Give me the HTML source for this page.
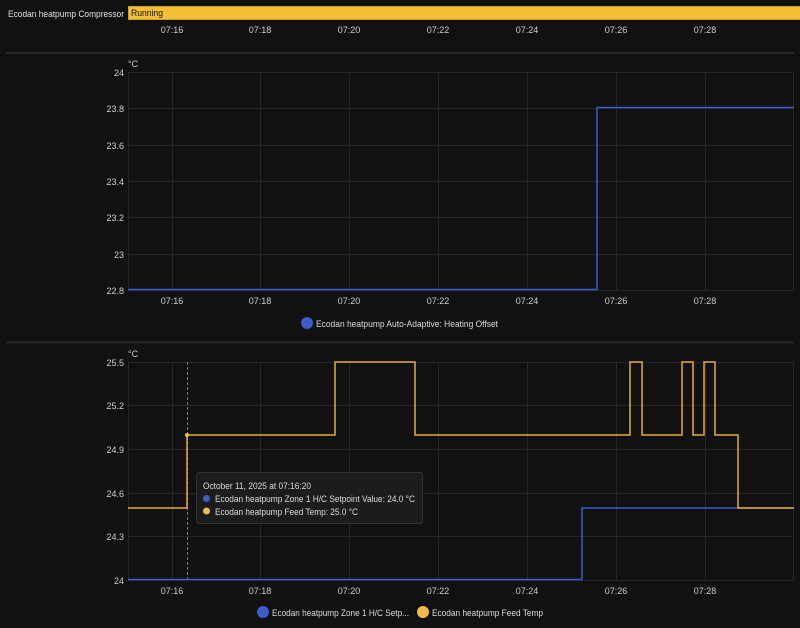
<!DOCTYPE html>
<html><head><meta charset="utf-8"><style>
html,body{margin:0;padding:0;background:#111111;width:800px;height:628px;overflow:hidden;font-family:"Liberation Sans",Roboto,sans-serif;}
svg text{font-family:"Liberation Sans",sans-serif;}
</style></head><body>
<svg width="800" height="628" viewBox="0 0 800 628" xmlns="http://www.w3.org/2000/svg">
<rect width="800" height="628" fill="#111111"/>
<text x="8" y="17" font-size="9.5" fill="#e1e1e1" textLength="116" lengthAdjust="spacingAndGlyphs">Ecodan heatpump Compressor</text>
<rect x="128.5" y="6.5" width="672" height="13" fill="#f4bf33" stroke="#c9a02c"/>
<text x="131" y="16" font-size="9.5" fill="#111" textLength="32" lengthAdjust="spacingAndGlyphs">Running</text>
<g font-size="9" fill="#cfcfcf" text-anchor="middle">
<text x="172" y="33">07:16</text><text x="260" y="33">07:18</text><text x="349" y="33">07:20</text><text x="438" y="33">07:22</text><text x="527" y="33">07:24</text><text x="616" y="33">07:26</text><text x="705" y="33">07:28</text>
</g>
<line x1="6" y1="53" x2="794" y2="53" stroke="#2e2e2e" stroke-width="1.5"/>
<g stroke="#262626" stroke-width="1">
<line x1="128" y1="72.5" x2="794" y2="72.5"/><line x1="128" y1="108.5" x2="794" y2="108.5"/><line x1="128" y1="145.5" x2="794" y2="145.5"/><line x1="128" y1="181.5" x2="794" y2="181.5"/><line x1="128" y1="217.5" x2="794" y2="217.5"/><line x1="128" y1="254.5" x2="794" y2="254.5"/><line x1="128" y1="290.5" x2="794" y2="290.5"/>
<line x1="128.5" y1="72" x2="128.5" y2="290"/><line x1="172.5" y1="72" x2="172.5" y2="290"/><line x1="260.5" y1="72" x2="260.5" y2="290"/><line x1="349.5" y1="72" x2="349.5" y2="290"/><line x1="438.5" y1="72" x2="438.5" y2="290"/><line x1="527.5" y1="72" x2="527.5" y2="290"/><line x1="616.5" y1="72" x2="616.5" y2="290"/><line x1="705.5" y1="72" x2="705.5" y2="290"/><line x1="793.5" y1="72" x2="793.5" y2="290"/>
</g>
<g font-size="9" fill="#cfcfcf" text-anchor="end">
<text x="124" y="76">24</text><text x="124" y="112">23.8</text><text x="124" y="149">23.6</text><text x="124" y="185">23.4</text><text x="124" y="221">23.2</text><text x="124" y="258">23</text><text x="124" y="294">22.8</text>
</g>
<text x="128" y="67" font-size="9" fill="#cfcfcf">°C</text>
<polyline points="128,289.5 597,289.5 597,107.5 794,107.5" fill="none" stroke="#3d5bc9" stroke-width="1.5"/>
<g font-size="9" fill="#cfcfcf" text-anchor="middle">
<text x="172" y="304">07:16</text><text x="260" y="304">07:18</text><text x="349" y="304">07:20</text><text x="438" y="304">07:22</text><text x="527" y="304">07:24</text><text x="616" y="304">07:26</text><text x="705" y="304">07:28</text>
</g>
<circle cx="307" cy="323" r="6" fill="#3d5bc9"/>
<text x="316" y="327" font-size="9.5" fill="#dcdcdc" textLength="182" lengthAdjust="spacingAndGlyphs">Ecodan heatpump Auto-Adaptive: Heating Offset</text>
<line x1="6" y1="342.5" x2="794" y2="342.5" stroke="#2e2e2e" stroke-width="1.5"/>
<g stroke="#262626" stroke-width="1">
<line x1="128" y1="362.5" x2="794" y2="362.5"/><line x1="128" y1="405.5" x2="794" y2="405.5"/><line x1="128" y1="449.5" x2="794" y2="449.5"/><line x1="128" y1="493.5" x2="794" y2="493.5"/><line x1="128" y1="536.5" x2="794" y2="536.5"/><line x1="128" y1="580.5" x2="794" y2="580.5"/>
<line x1="128.5" y1="362" x2="128.5" y2="580"/><line x1="172.5" y1="362" x2="172.5" y2="580"/><line x1="260.5" y1="362" x2="260.5" y2="580"/><line x1="349.5" y1="362" x2="349.5" y2="580"/><line x1="438.5" y1="362" x2="438.5" y2="580"/><line x1="527.5" y1="362" x2="527.5" y2="580"/><line x1="616.5" y1="362" x2="616.5" y2="580"/><line x1="705.5" y1="362" x2="705.5" y2="580"/><line x1="793.5" y1="362" x2="793.5" y2="580"/>
</g>
<g font-size="9" fill="#cfcfcf" text-anchor="end">
<text x="124" y="366">25.5</text><text x="124" y="409">25.2</text><text x="124" y="453">24.9</text><text x="124" y="497">24.6</text><text x="124" y="540">24.3</text><text x="124" y="584">24</text>
</g>
<text x="128" y="357" font-size="9" fill="#cfcfcf">°C</text>
<line x1="187.5" y1="362" x2="187.5" y2="580" stroke="#4a7fc0" stroke-width="1" stroke-dasharray="3,2"/>
<polyline points="128,579.5 582,579.5 582,508 794,508" fill="none" stroke="#3d5bc9" stroke-width="1.5"/>
<polyline points="128,508 187,508 187,435 335,435 335,362 415,362 415,435 630,435 630,362 642,362 642,435 682,435 682,362 693,362 693,435 704,435 704,362 715,362 715,435 738,435 738,508 794,508" fill="none" stroke="#e3ac3a" stroke-width="1.5"/>
<circle cx="187" cy="435" r="2" fill="#f4bf33"/>
<g font-size="9" fill="#cfcfcf" text-anchor="middle">
<text x="172" y="594">07:16</text><text x="260" y="594">07:18</text><text x="349" y="594">07:20</text><text x="438" y="594">07:22</text><text x="527" y="594">07:24</text><text x="616" y="594">07:26</text><text x="705" y="594">07:28</text>
</g>
<rect x="196.5" y="472.5" width="226" height="51" rx="3" fill="#1c1c1c" stroke="#333"/>
<text x="203" y="489" font-size="9.5" fill="#dcdcdc" textLength="108" lengthAdjust="spacingAndGlyphs">October 11, 2025 at 07:16:20</text>
<circle cx="206.5" cy="498.5" r="3.5" fill="#3d5bc9"/>
<text x="215" y="502" font-size="9.5" fill="#dcdcdc" textLength="200" lengthAdjust="spacingAndGlyphs">Ecodan heatpump Zone 1 H/C Setpoint Value: 24.0 °C</text>
<circle cx="206.5" cy="511" r="3.5" fill="#f0bb4a"/>
<text x="215" y="515" font-size="9.5" fill="#dcdcdc" textLength="143" lengthAdjust="spacingAndGlyphs">Ecodan heatpump Feed Temp: 25.0 °C</text>
<circle cx="263" cy="612" r="6" fill="#3d5bc9"/>
<text x="272" y="616" font-size="9.5" fill="#dcdcdc" textLength="137" lengthAdjust="spacingAndGlyphs">Ecodan heatpump Zone 1 H/C Setp...</text>
<circle cx="423" cy="612" r="6" fill="#f0bb4a"/>
<text x="432" y="616" font-size="9.5" fill="#dcdcdc" textLength="111" lengthAdjust="spacingAndGlyphs">Ecodan heatpump Feed Temp</text>
</svg>
</body></html>
